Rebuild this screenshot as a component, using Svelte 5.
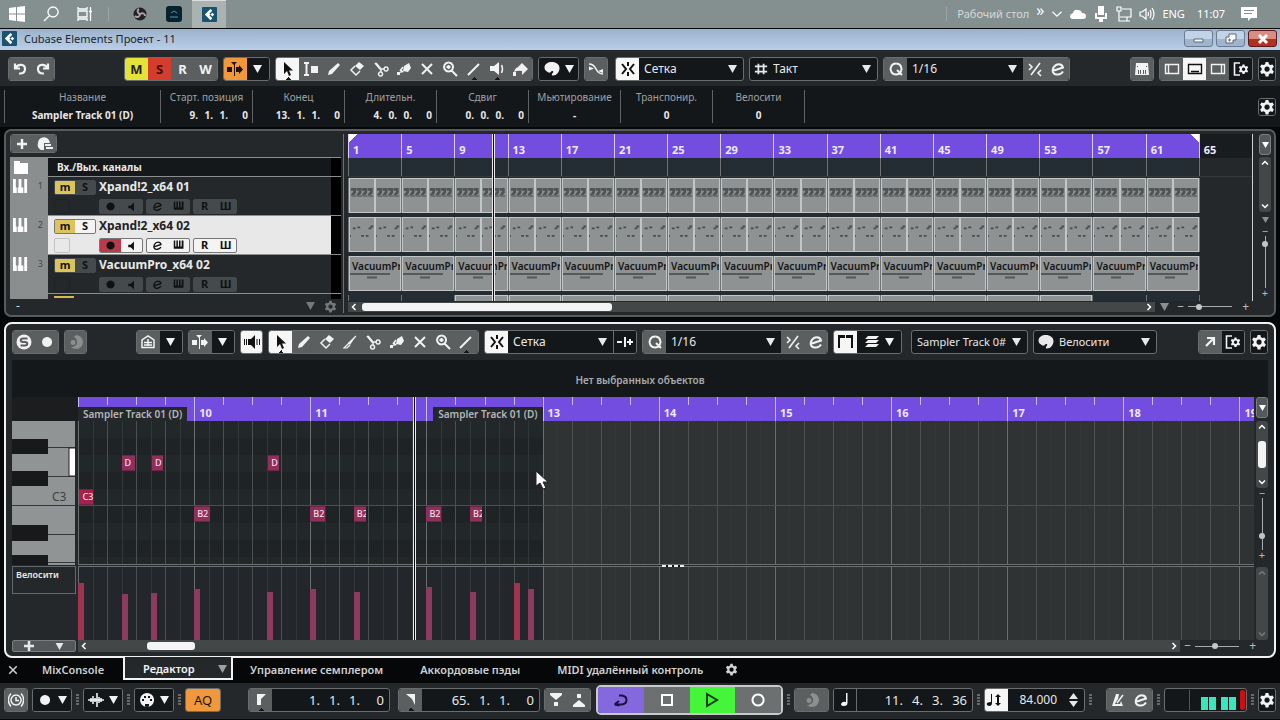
<script lang="ts">
	type Shape = { f?: string; s?: string; w?: number };

	// every icon is drawn on a 16x16 box: f = filled path, s = stroked path
	const icons: Record<string, Shape> = {
		undo: { s: 'M3 2.500v5h5M3.500 7C6 2.500 13 3 13 8c0 3-2 4.500-5 4.500H7', w: 2.2 },
		redo: { s: 'M13 2.500v5H8M12.500 7C10 2.500 3 3 3 8c0 3 2 4.500 5 4.500h1', w: 2.2 },
		scroll: { f: 'M0 6h5v5H0zM9 6h3V4l4 4.500-4 4.500v-2H9zM4 1h6L7 4z', s: 'M7.500 2v13', w: 1 },
		arrow: { f: 'M4 1v12l3-3 2 5 2-1-2-4.500h4z' },
		range: { f: 'M8 5h7v7H8z', s: 'M1 2h5M1 14h5M3.500 2v12', w: 2 },
		pencil: { f: 'M2 14l1-4 9-8 2 2-8 9z' },
		eraser: { f: 'M6 5l4-4 5 4-4 4z', s: 'M6 5l-4 4 5 5 4-4', w: 1.5 },
		knife: { f: 'M6 9l8-7-6 9z', s: 'M14 2L2 14h3l3-3', w: 1.2 },
		cut: { s: 'M2 2l5 6h4M3 2l5 6v3M13 6a2 2 0 1 0 .1 0M7.500 11a2 2 0 1 0 .1 0', w: 1.5 },
		glue: { f: 'M8 5l5-3 2 5-3 4-5-1zM5 8l3 3-4 1zM1 11h3v3H1z', s: 'M7 6l-3 4', w: 1.5 },
		mute: { s: 'M3 3l10 10M13 3L3 13', w: 2 },
		zoom: { s: 'M6.500 1.500a4.500 4.500 0 1 0 .1 0M10 10l5 5M4.500 6h4M6.500 4v4', w: 2 },
		line: { s: 'M2 14L13 3', w: 2 },
		speaker: { f: 'M1 5h4l5-4v13l-5-4H1z', s: 'M12.500 4q2 4 0 8', w: 1.5 },
		listen: { f: 'M4 5h3l4-4v14l-4-4H4z', s: 'M.5 5v6M2.500 5v6M13 5v6M15.500 5v6', w: 1 },
		bucket: { f: 'M6 6l4-4 6 6-6 6v-4q-4-1-8 1 1-4 4-5zM1 11h3v4H1z' },
		palette: { f: 'M8 1c4 0 7.500 2.500 7.500 6 0 4-3 7.500-6.500 7.500-2 0-1-2 0-3 1-1.500-1-2-2-1-1 2-3 1-4 0-1.500-1-2.500-2-2.500-4C.5 3 4 1 8 1z' },
		cross: { f: 'M1 5.500l5 2-5 2zM15 8l-5 2 5 2z', s: 'M1 3c9 0 5 10 14 10', w: 1.6 },
		snap: { s: 'M8 1v4M8 11v4M2 3l4 5-4 5M14 3l-4 5 4 5', w: 2 },
		hash: { s: 'M5 2v12M11 2v12M1 5h14M1 11h14', w: 2 },
		q: { s: 'M8 2.500a5.500 5.500 0 1 0 .1 0M9 9l5 5', w: 2 },
		swing: { s: 'M13 2L4 14M2 3l3 3-3 3M14 9l-3 3 3 3', w: 1.6 },
		e: { s: 'M4 9.500l9-3C12 2 6 2 3.500 6.500 1 12 5 14 8 13.500c2 0 4-1.500 5-3', w: 2 },
		keys: { f: 'M2 2h12l1 12H1zM4 9h1v4H4zM6 9h1v4H6zM9 9h1v4H9zM11 9h1v4h-1zM3 5h1v1H3zM12 5h1v1h-1z' },
		zoneL: { s: 'M1.500 3.500h13v9h-13zM4.500 4v8', w: 1.4 },
		zoneB: { s: 'M1.500 3.500h13v9h-13zM4 10.500h8', w: 1.4 },
		zoneR: { s: 'M1.500 3.500h13v9h-13zM11.500 4v8', w: 1.4 },
		piano: { f: 'M0 0h3v9h1v6H0zM6 9V0h3v9h2v6H5V9zM12 0h3v15h-3V9z' },
		minikeys: { f: 'M1 2h2v8h1.500V2h2v8H8V2h2v8h1.500V2H14v11H1z' },
		folder: { f: 'M1 1h6v2h8v11H1z' },
		plus: { s: 'M8 3v10M3 8h10', w: 2.5 },
		preset: { f: 'M1 7a6 6 0 0 1 11-3l1 3H7v7H4A6 6 0 0 1 1 7zM8 8h6v2H8zM9 11h7v2H9z' },
		dot: { f: 'M8 3a5 5 0 1 0 .1 0z' },
		monitor: { f: 'M4 7h3l4-4v11l-4-4H4z' },
		solo: { f: 'M8 0a8 8 0 1 0 .1 0z' },
		moon: { f: 'M8 1a7 7 0 0 1 0 14 8 8 0 0 1-5-2c7 0 8-7 3-10zM5 6a2.500 2.500 0 1 0 .1 0z' },
		house: { s: 'M2 13.500V6l6-4 6 4v7.500zM4 8.500h8M4 11h8M8 5v7', w: 1.5 },
		clip: { f: 'M0 1h7v3H2v10H0zM8 1h7v13h-2V4H8z' },
		layers: { f: 'M4 2h11l-3 3H1zM4 6h11l-3 3H1zM4 10h11l-3 3H1z' },
		adapt: { s: 'M0 8h5M8 3v10M10 8h6M13 5v6', w: 2 },
		open: { s: 'M5 4h7v7M12 4l-8 8', w: 2.2 },
		clock: { s: 'M8 3a5 5 0 1 0 .1 0M8 5v3.500h3M3 1.500C-.5 5-.5 11 3 14.500M13 1.500c3.500 3.500 3.500 9.500 0 13', w: 1.500 },
		wave: { s: 'M0 8h2M3 6v4M5 4v8M7 6v4M9 1v14M11 5v6M13 6v4M14 8h2M2 8h12', w: 1.6 },
		midi: { f: 'M8 1a7 7 0 1 0 .1 0zM3 7h2v2H3zM5 4h2v2H5zM9 4h2v2H9zM11 7h2v2h-2zM6 12h4v3H6z' },
		locL: { f: 'M4 2h9L8 7v6H4z' },
		locR: { f: 'M3 2h9v11L9 7z' },
		punchIn: { f: 'M2 1h12v2L8 8 2 3zM6 10h4v4H6z' },
		punchOut: { f: 'M2 15h12v-2L8 8l-6 5zM6 2h4v4H6z' },
		cycle: { s: 'M2 12l4-3M1.500 12.500H9c6-1 6-8 0-9H6M1.500 12.500l5 1', w: 2 },
		stop: { s: 'M3 3h10v10H3z', w: 2 },
		play: { s: 'M3 2l10 6-10 6z', w: 2 },
		record: { s: 'M8 2.500a5.500 5.500 0 1 0 .1 0z', w: 2 },
		note: { f: 'M9 1h1.500v10q0 3-3.500 3-3 0-3-2 1-3 5-2z' },
		tempo: { f: 'M5 2h1v9q0 3-3 3-3-1-2-3 2-1 4-1zM9 5l3-3 3 3h-2v6h2l-3 3-3-3h2V5z' },
		metro: { f: 'M6 2h3l-1 5-2 3-1 2h5l1-3 2 5H2z', s: 'M7 11l6-8', w: 1.600 },
		win: { f: 'M0 2l7-1v6.500H0zM8 1l8-1v7.500H8zM0 8.500h7V15l-7-1zM8 8.500h8V16l-8-1z' },
		search: { s: 'M10 1a5 5 0 1 0 .1 0M6.500 9.500L1 15', w: 1.3 },
		tasks: { s: 'M1 1v2h9V1M1 15v-2h9v2M1 5h9v6H1zM13.500 1v14M12 5.500h3', w: 1.3 },
		cloud: { f: 'M3 13q-3 0-3-3 0-2 3-3 1-4 5-3 3 0 4 3 4 0 4 3 0 3-3 3z' },
		mic: { f: 'M5 0h6v9H5zM2 7h2v4h8V7h2v6h-4v3H6v-3H2z' },
		net: { s: 'M6 3h9v8H4M1 1h4v4H1zM3 5v10h5M11 11v4M8 15h6', w: 1.2 },
		volume: { s: 'M1 6h2l4-3v10l-4-3H1zM9 6q1 2 0 4M11 4q2 4 0 8M13 2q4 6 0 12', w: 1.2 },
		message: { f: 'M0 1h16v11h-6l-3 3v-3H0zM3 4v1h10V4zM3 7v1h8V7z' },
		down: { s: 'M2 5l6 6 6-6', w: 1.6 },
		close: { s: 'M3 3l10 10M13 3L3 13', w: 2 },
		up: { s: 'M4 10l4-4 4 4', w: 2 },
		dn: { s: 'M4 6l4 4 4-4', w: 2 },
		lt: { s: 'M10 4L6 8l4 4', w: 2 },
		rt: { s: 'M6 4l4 4-4 4', w: 2 },
		gear: {
			f: 'M6.600 1h2.800l.5 2.200 1.500.9 2.100-.7 1.400 2.400-1.600 1.500v1.800l1.600 1.500-1.400 2.400-2.100-.7-1.500.9-.5 2.200H6.600l-.5-2.200-1.500-.9-2.100.7-1.400-2.400 1.600-1.500V7.300L1.100 5.800l1.400-2.400 2.100.7 1.500-.9zM8 5.500a2.600 2.600 0 1 0 .1 0z'
		},
		zoneGear: {
			f: 'M9.500 3.500h2l.3 1.400 1 .6 1.400-.5 1 1.700-1.100 1v1.200l1.100 1-1 1.700-1.400-.5-1 .6-.3 1.400h-2l-.3-1.400-1-.6-1.400.5-1-1.700 1.100-1V7.700l-1.100-1 1-1.700 1.400.5 1-.6zM10.500 6.500a1.700 1.700 0 1 0 .1 0z',
			s: 'M7 2H1.500v12H7',
			w: 1.6
		}
	};

	const info = [
		{ label: 'Название', value: 'Sampler Track 01 (D)' },
		{ label: 'Старт. позиция', time: ['9.', '1.', '1.', '0'] },
		{ label: 'Конец', time: ['13.', '1.', '1.', '0'] },
		{ label: 'Длительн.', time: ['4.', '0.', '0.', '0'] },
		{ label: 'Сдвиг', time: ['0.', '0.', '0.', '0'] },
		{ label: 'Мьютирование', value: '-' },
		{ label: 'Транспонир.', value: '0' },
		{ label: 'Велосити', value: '0' }
	];

	const tracks = [
		{ name: 'Xpand!2_x64 01', selected: false },
		{ name: 'Xpand!2_x64 02', selected: true },
		{ name: 'VacuumPro_x64 02', selected: false }
	];

	const projectBars = Array.from({ length: 17 }, (_, i) => 1 + i * 4);
	const tools = ['range', 'pencil', 'eraser', 'cut', 'glue', 'mute', 'zoom', 'line', 'speaker', 'bucket'];
	const editorTools = ['pencil', 'eraser', 'knife', 'cut', 'glue', 'mute', 'zoom', 'line'];

	// editor view: sixteenths counted from bar 9
	const visible = 162;
	const pct = (sixteenth: number) => `${(sixteenth / visible) * 100}%`;
	const gridLines = Array.from({ length: 81 }, (_, i) => i * 2);
	const beats = Array.from({ length: 41 }, (_, i) => i * 4);
	const editorBars = Array.from({ length: 11 }, (_, i) => 9 + i);
	const rowHeight = 17;

	const notes = [
		{ at: 0.2, len: 1.8, row: 4, name: 'C3', hot: true },
		{ at: 6, len: 1.8, row: 2, name: 'D' },
		{ at: 10.2, len: 1.5, row: 2, name: 'D' },
		{ at: 26.2, len: 1.5, row: 2, name: 'D' },
		{ at: 16, len: 2.2, row: 5, name: 'B2' },
		{ at: 32, len: 2, row: 5, name: 'B2' },
		{ at: 38, len: 1.7, row: 5, name: 'B2' },
		{ at: 48, len: 2, row: 5, name: 'B2' },
		{ at: 54, len: 1.6, row: 5, name: 'B2' }
	];

	const velocities = [
		{ at: 0, v: 57, hot: true },
		{ at: 6, v: 46 },
		{ at: 10, v: 47 },
		{ at: 16, v: 51 },
		{ at: 26, v: 48 },
		{ at: 32, v: 51 },
		{ at: 38, v: 48 },
		{ at: 48, v: 53 },
		{ at: 54, v: 48 },
		{ at: 60, v: 57, hot: true },
		{ at: 62, v: 51 }
	];

	let automation = $state(false);
</script>

{#snippet icon(name: string, size = 16)}
	<svg class="icon" width={size} height={size} viewBox="0 0 16 16" aria-hidden="true">
		{#if icons[name].f}<path d={icons[name].f} fill="currentColor" fill-rule="evenodd" />{/if}
		{#if icons[name].s}
			<path d={icons[name].s} fill="none" stroke="currentColor" stroke-width={icons[name].w} />
		{/if}
	</svg>
{/snippet}

{#snippet caret()}
	<svg class="caret" width="9" height="8" viewBox="0 0 9 8" aria-hidden="true"><path d="M0 0h9L4.500 8z" fill="currentColor" /></svg>
{/snippet}

{#snippet tool(name: string, cls = '')}
	<button class={cls} aria-label={name}>{@render icon(name)}</button>
{/snippet}

{#snippet dropdown(label: string, value: string)}
	<label class="dropdown">
		<select aria-label={label}><option>{value}</option></select>
		{@render caret()}
	</label>
{/snippet}

{#snippet dots()}
	<svg class="dots" width="3" height="12" viewBox="0 0 3 12"><path d="M0 1h3M0 4h3M0 7h3M0 10h3" stroke="#aaa" /></svg>
{/snippet}

{#snippet cubase(size: number)}
	<svg width={size} height={size} viewBox="0 0 16 16" aria-hidden="true">
		<rect width="16" height="16" rx="1" fill="#19536f" />
		<path d="M9 2L3 8l6 6 2-2-3-3 1-1-1-1 3-3z" fill="#fff" />
		<path d="M11 6l2 2-2 2-2-2z" fill="#fff" />
	</svg>
{/snippet}

{#snippet time(parts: string[])}
	<span class="time">{#each parts as part}<span>{part}</span>{/each}</span>
{/snippet}

{#snippet pianoRollGrid()}
	{#each gridLines as at}
		<i class="line" class:bar={at % 16 === 0} class:beat={at % 4 === 0} class:inside={at < 64} style="left: {pct(at)}"></i>
	{/each}
{/snippet}

<header class="taskbar">
	<button aria-label="Пуск">{@render icon('win')}</button>
	<button aria-label="Поиск">{@render icon('search')}</button>
	<button aria-label="Задачи">{@render icon('tasks')}</button>
	<i class="sep"></i>
	<button aria-label="OBS">
		<svg width="14" height="14" viewBox="0 0 14 14"><circle cx="7" cy="7" r="6.500" fill="#241f22" /><path d="M7 7C4 6 4 3 6 2M7 7c3-2 5 0 5 2M7 7c0 3-3 4-5 2" fill="none" stroke="#a9a5a7" stroke-width="2" /></svg>
	</button>
	<button aria-label="Менеджер">
		<svg width="16" height="16" viewBox="0 0 16 16"><rect width="16" height="16" rx="3" fill="#06222c" /><path d="M4 11h8M5 7l3-2 3 2" stroke="#5b93a1" fill="none" /></svg>
	</button>
	<button class="running" aria-label="Cubase">{@render cubase(15)}</button>
	<div class="tray">
		<i class="sep"></i>
		<span class="desk">Рабочий стол</span>
		<span class="more">»</span>
		{@render icon('down', 12)}
		{@render icon('cloud')}
		{@render icon('mic')}
		{@render icon('net')}
		{@render icon('volume')}
		<span>ENG</span>
		<span class="clock">11:07</span>
		{@render icon('message')}
	</div>
</header>

<div class="titlebar">
	{@render cubase(15)}
	<span>Cubase Elements Проект - 11</span>
	<button aria-label="Свернуть"><svg width="12" height="10"><path d="M1 5h9v3H1z" fill="#fff" stroke="#56677c" /></svg></button>
	<button aria-label="Восстановить"><svg width="12" height="11"><path d="M4 1h7v6H8v3H1V4h3zM4 6h1v2H4z" fill="#fff" stroke="#56677c" /></svg></button>
	<button class="quit" aria-label="Закрыть"><svg width="12" height="10"><path d="M2 1l8 8M10 1L2 9" stroke="#fff" stroke-width="3" /></svg></button>
</div>

<div class="toolbar">
	<div class="group two history">{@render tool('undo')}{@render tool('redo')}</div>
	<div class="group four states">
		<button class="yellow">M</button>
		<button class="red">S</button>
		<button onclick={() => (automation = !automation)}>R</button>
		<button>W</button>
	</div>
	<div class="group two">{@render tool('scroll', 'orange')}<button class="dark" aria-label="Меню">{@render caret()}</button></div>
	<div class="group tools">
		{@render tool('arrow', 'on notch')}
		{#each tools as name}{@render tool(name, name === 'line' || name === 'speaker' ? 'notch' : '')}{/each}
	</div>
	<div class="group pair"><button class="dark wide" aria-label="Цвет">{@render icon('palette')}{@render caret()}</button></div>
	<div class="group one">{@render tool('cross')}</div>
	<div class="group snap">{@render tool('snap', 'on')}{@render dropdown('Привязка', 'Сетка')}</div>
	<div class="group gridtype"><span class="lead">{@render icon('hash', 14)}</span>{@render dropdown('Тип сетки', 'Такт')}</div>
	<div class="group quant">{@render tool('q')}{@render dropdown('Квантизация', '1/16')}{@render tool('swing')}{@render tool('e')}</div>
	<div class="group one end">{@render tool('keys')}</div>
	<div class="group four">
		{@render tool('zoneL')}{@render tool('zoneB', 'on')}{@render tool('zoneR')}{@render tool('zoneGear', 'dark')}
	</div>
	<div class="group slim">{@render tool('gear', 'dark')}</div>
</div>

<div class="infoline">
	{#each info as cell}
		<div class="cell">
			<span class="label">{cell.label}</span>
			{#if cell.time}{@render time(cell.time)}{:else}<b>{cell.value}</b>{/if}
		</div>
	{/each}
	<div class="cell last"><div class="group slim">{@render tool('gear', 'dark')}</div></div>
</div>

<section class="project">
	<div class="tracklist">
		<div class="list-head"><div class="group two small">{@render tool('plus')}{@render tool('preset')}</div></div>
		<div class="rows">
			<div class="track io">
				<div class="strip">{@render icon('folder')}</div>
				<b>Вх./Вых. каналы</b>
				<i class="meter"></i>
			</div>
			{#each tracks as track, i}
				<div class="track" class:selected={track.selected}>
					<div class="strip">{@render icon('piano', 15)}<small>{i + 1}</small></div>
					<div class="body">
						<div class="line1">
							<div class="ms"><button class="m">m</button><button>S</button></div>
							<b>{track.name}</b>
						</div>
						<div class="line2">
							<i class="slot"></i>
							<div class="mini"><button class="rec" aria-label="Запись">{@render icon('dot', 13)}</button><button aria-label="Монитор">{@render icon('monitor', 13)}</button></div>
							<div class="mini"><button aria-label="Правка">{@render icon('e', 11)}</button><button aria-label="Инструмент">{@render icon('minikeys', 12)}</button></div>
							<div class="mini"><button>R</button><button>Ш</button></div>
						</div>
					</div>
					<i class="meter"></i>
				</div>
			{/each}
			<div class="track cut"><div class="strip"></div><i class="peek"></i><i class="meter"></i></div>
		</div>
		<div class="list-foot"><span>-</span>{@render caret()}{@render icon('gear', 13)}</div>
	</div>

	<div class="arrange">
		<div class="canvas">
			<div class="ruler">
				{#each projectBars as bar}<span class:outside={bar === 65}>{bar}</span>{/each}
			</div>
			<div class="lane io-lane">{#each projectBars as _}<i></i>{/each}</div>
			<div class="lane">
				{#each projectBars as bar}
					<div class="slot4">
						{#if bar < 65}
							{#each [0, 1] as _}
								<svg class="clip" viewBox="0 0 26 35" preserveAspectRatio="none">
									<path d="M1 11h4v3l-3 4M7 11h4v3l-3 4M13 11h4v3l-3 4M19 11h4v3l-3 4" fill="none" stroke="#505455" stroke-width="3" />
									<path d="M2 18h23" stroke="#6a6e6f" stroke-width="2" stroke-dasharray="5 1" />
								</svg>
							{/each}
						{/if}
					</div>
				{/each}
			</div>
			<div class="lane">
				{#each projectBars as bar}
					<div class="slot4">
						{#if bar < 65}
							{#each [0, 1] as _}
								<svg class="clip" viewBox="0 0 26 35" preserveAspectRatio="none">
									<path d="M3 11h3M8 10h3M20 11h3M22 9h3M12 19h3M17 19h3M0 19h1" stroke="#484c4d" stroke-width="2" />
								</svg>
							{/each}
						{/if}
					</div>
				{/each}
			</div>
			<div class="lane">
				{#each projectBars as bar}
					<div class="slot4">
						{#if bar < 65}
							<div class="clip named">
								<span>VacuumPr</span>
								<svg width="42" height="7" viewBox="0 0 42 7"><path d="M0 1h40M17 4.500h10" stroke="#55595a" stroke-width="2" /></svg>
							</div>
						{/if}
					</div>
				{/each}
			</div>
			<div class="lane sliver">
				{#each projectBars as bar}<div class="slot4">{#if bar > 8 && bar < 57}<div class="clip"></div>{/if}</div>{/each}
			</div>
			<i class="playhead" style="left: {(10.85 / 68) * 100}%"></i>
		</div>
		<div class="hscroll">
			<div class="track-bar"><button aria-label="Влево">{@render icon('lt', 12)}</button><i class="thumb first"></i><button aria-label="Вправо">{@render icon('rt', 12)}</button></div>
			{@render caret()}
			<span>−</span><input type="range" value="20" aria-label="Масштаб по горизонтали" /><span>+</span>
		</div>
	</div>

	<div class="side">
		<button class="drop" aria-label="Меню линейки">{@render caret()}</button>
		<div class="vscroll"><button aria-label="Вверх">{@render icon('up', 12)}</button><button aria-label="Вниз">{@render icon('dn', 12)}</button></div>
		{@render caret()}
		<span>−</span><input type="range" value="10" aria-label="Масштаб по вертикали" /><span>+</span>
	</div>
</section>

<section class="editor">
	<div class="toolbar">
		<div class="group two">
			<button aria-label="Соло">
				<svg width="16" height="16" viewBox="0 0 16 16"><circle cx="8" cy="8" r="7.500" fill="#f2f2f2" /><path d="M11.500 4.500H7c-3 0-3 3.500 0 3.500h2c3 0 3 3.500 0 3.500H4.500" fill="none" stroke="#5b5f60" stroke-width="2" /></svg>
			</button>
			{@render tool('dot')}
		</div>
		<div class="group one">{@render tool('moon', 'dim')}</div>
		<div class="group two house">{@render tool('house')}<button class="dark" aria-label="Меню">{@render caret()}</button></div>
		<div class="group two">{@render tool('scroll')}<button class="dark" aria-label="Меню">{@render caret()}</button></div>
		<div class="group one">{@render tool('listen', 'on')}</div>
		<div class="group etools">
			{@render tool('arrow', 'on notch')}
			{#each editorTools as name}{@render tool(name, name === 'line' ? 'notch' : '')}{/each}
		</div>
		<div class="group esnap">{@render tool('snap', 'on')}{@render dropdown('Привязка', 'Сетка')}{@render tool('adapt', 'dark edge-left')}</div>
		<div class="group quant">{@render tool('q')}{@render dropdown('Квантизация', '1/16')}{@render tool('swing')}{@render tool('e')}</div>
		<div class="group parts">{@render tool('clip', 'on')}<button class="dark wide" aria-label="Слои">{@render icon('layers')}{@render caret()}</button></div>
		<div class="group part">{@render dropdown('Партия', 'Sampler Track 0#')}</div>
		<div class="group color"><span class="lead">{@render icon('palette')}</span>{@render dropdown('Цвета', 'Велосити')}</div>
		<div class="group two end">{@render tool('open')}{@render tool('zoneGear', 'dark')}</div>
		<div class="group slim">{@render tool('gear', 'dark')}</div>
	</div>

	<p class="status">Нет выбранных объектов</p>

	<div class="roll">
		<div class="left">
			<div class="corner"></div>
			<svg class="keyboard" width="63" height="144" viewBox="0 0 63 144">
				<rect width="63" height="144" fill="#909495" />
				<path d="M36 26.500h27M36 55.500h27M0 84.500h63M36 113.500h27M36 141.500h27" stroke="#34383a" />
				<path d="M0 18h36v15H0zM0 50h36v15H0zM0 104h36v16H0zM0 134h36v10H0z" fill="#17191a" />
				<path d="M57 27h7v28h-7z" fill="#fff" stroke="#222" />
				<text x="40" y="80" font-size="12" fill="#3d4142">C3</text>
			</svg>
			<div class="lane-name">Велосити</div>
			<div class="lane-buttons">{@render tool('plus')}<button aria-label="Меню дорожек">{@render caret()}</button></div>
		</div>

		<div class="view">
			<div class="eruler">
				{#each beats as at}<i class:bar={at % 16 === 0} style="left: {pct(at)}"></i>{/each}
				{#each editorBars as bar, i}{#if bar !== 9 && bar !== 12}<b style="left: {pct(i * 16)}">{bar}</b>{/if}{/each}
				<span class="part-name" style="left: 0">Sampler Track 01 (D)</span>
				<span class="part-name" style="right: {100 - (64 / visible) * 100}%">Sampler Track 01 (D)</span>
			</div>
			<div class="notes">
				<div class="shade" style="width: {pct(64)}"></div>
				{@render pianoRollGrid()}
				{#each notes as note}
					<span class="note" class:hot={note.hot} style="left: {pct(note.at)}; width: {pct(note.len)}; top: {note.row * rowHeight}px">{note.name}</span>
				{/each}
			</div>
			<div class="divider"><i style="left: {pct(80.4)}"></i></div>
			<div class="velocity">
				<div class="shade" style="width: {pct(64)}"></div>
				{@render pianoRollGrid()}
				{#each velocities as bar}
					<i class="vel" class:hot={bar.hot} style="left: {pct(bar.at)}; height: {bar.v}px"></i>
				{/each}
			</div>
			<i class="playhead" style="left: {pct(46.2)}"></i>
			<svg class="cursor" width="14" height="20" viewBox="0 0 14 20" style="left: {pct(63)}"><path d="M1 1v15l4-3 3 6 3-1-3-6h5z" fill="#fff" stroke="#222" /></svg>
		</div>

		<div class="side">
			<button class="drop" aria-label="Меню линейки">{@render caret()}</button>
			<div class="vscroll tall"><button aria-label="Вверх">{@render icon('up', 12)}</button><i></i><button aria-label="Вниз">{@render icon('dn', 12)}</button></div>
			<span>−</span><input type="range" value="75" aria-label="Высота нот" /><span>+</span>
			<div class="vscroll faded"><button aria-label="Вверх">{@render icon('up', 12)}</button><button aria-label="Вниз">{@render icon('dn', 12)}</button></div>
		</div>
		<div class="hscroll">
			<div class="track-bar"><button aria-label="Влево">{@render icon('lt', 12)}</button><i class="thumb second"></i><button aria-label="Вправо">{@render icon('rt', 12)}</button></div>
			<span>−</span><input type="range" value="45" aria-label="Масштаб по горизонтали" /><span>+</span>
		</div>
	</div>
</section>

<nav class="tabs">
	<button aria-label="Закрыть">{@render icon('close', 12)}</button>
	<a href="#mix">MixConsole</a>
	<a href="#editor" class="current">Редактор {@render caret()}</a>
	<a href="#sampler">Управление семплером</a>
	<a href="#chords">Аккордовые пэды</a>
	<a href="#midi">MIDI удалённый контроль</a>
	<button aria-label="Настройка">{@render icon('gear', 13)}</button>
</nav>

<footer class="transport">
	<div class="group one">{@render tool('clock')}</div>
	<div class="group pair"><button class="dark wide" aria-label="Режим записи">{@render icon('dot')}{@render caret()}</button></div>
	{@render dots()}
	<div class="group pair"><button class="dark wide" aria-label="Аудио">{@render icon('wave')}{@render caret()}</button></div>
	{@render dots()}
	<div class="group pair"><button class="dark wide" aria-label="MIDI">{@render icon('midi')}{@render caret()}</button></div>
	{@render dots()}
	<div class="group aq"><button class="orange">AQ</button></div>
	<div class="group locator first-loc">{@render tool('locL', 'notch')}{@render time(['1.', '1.', '1.', '0'])}</div>
	<div class="group locator">{@render tool('locR', 'notch')}{@render time(['65.', '1.', '1.', '0'])}</div>
	<div class="group two">{@render tool('punchIn')}{@render tool('punchOut')}</div>
	<div class="main-controls">
		{@render tool('cycle', 'purple')}{@render tool('stop')}{@render tool('play', 'green')}{@render tool('record')}
	</div>
	{@render dots()}
	<div class="group moon">{@render tool('moon', 'dim')}</div>
	<div class="group locator position">{@render tool('note', 'dark edge')}{@render time(['11.', '4.', '3.', '36'])}</div>
	{@render dots()}
	<div class="group tempo">
		{@render tool('tempo', 'on')}
		<input type="text" value="84.000" aria-label="Темп" />
		<svg width="9" height="16" viewBox="0 0 9 16"><path d="M0 7l4.500-6L9 7zM0 9h9l-4.500 6z" fill="#e6e6e6" /></svg>
	</div>
	{@render dots()}
	<div class="group two click">{@render tool('metro')}{@render tool('e')}</div>
	{@render dots()}
	<div class="group levels">
		<svg viewBox="0 0 81 22" width="81" height="22">
			<path d="M24.500 1v20" stroke="#555" />
			<path d="M36 8h7v13h-7zM44 8h7v13h-7zM56 8h7v13h-7zM64 8h7v13h-7z" fill="#3ae6bd" />
			<rect x="75" y="1" width="5" height="20" rx="2" fill="#c8100f" />
		</svg>
	</div>
	{@render dots()}
	<div class="group slim">{@render tool('gear', 'dark')}</div>
</footer>

<style>
	:global(body) {
		margin: 0;
		background: #060708;
		color: #e8e8e8;
		font-family: 'Noto Sans', 'Open Sans', sans-serif;
		font-size: 12px;
		line-height: 16px;
		overflow: hidden;
	}

	:global(*) {
		box-sizing: border-box;
	}

	button,
	input,
	select {
		font: inherit;
		color: inherit;
		padding: 0;
		border: 0;
		margin: 0;
		background: none;
	}

	button {
		display: flex;
		align-items: center;
		justify-content: center;
	}

	a {
		color: inherit;
		text-decoration: none;
	}

	svg {
		flex: none;
		display: block;
	}

	/* windows taskbar */
	.taskbar {
		display: flex;
		align-items: center;
		height: 28px;
		background: #849090;
		color: #fff;
	}

	.taskbar button {
		width: 34px;
		height: 28px;
	}

	.taskbar .sep {
		width: 1px;
		height: 14px;
		margin: 0 7px 0 6px;
		background: #9aa5a5;
	}

	.taskbar button.running {
		margin-left: 1px;
		background: #aab2b2;
		border-top: 1px solid #d9dddd;
	}

	.taskbar button:nth-of-type(4) {
		margin-left: 7px;
	}

	.tray {
		display: flex;
		align-items: center;
		gap: 7px;
		margin-left: auto;
		padding-right: 23px;
		font-size: 11px;
	}

	.tray .sep {
		margin: 0 3px 0 0;
	}

	.desk {
		color: #d5dada;
	}

	.more {
		font-size: 16px;
		line-height: 12px;
		margin-bottom: 8px;
	}

	.clock {
		margin: 0 9px 0 5px;
	}

	.titlebar {
		display: flex;
		align-items: center;
		gap: 3px;
		height: 22px;
		margin-top: 1px;
		padding: 0 3px 2px 2px;
		border-bottom: 1px solid #222;
		background: linear-gradient(#9db3cc, #b9cfe9);
		color: #1c2530;
		font-size: 11px;
	}

	.titlebar span {
		margin: 0 auto 0 4px;
	}

	.titlebar button {
		width: 29px;
		height: 17px;
		border: 1px solid #6a7c93;
		border-radius: 3px;
		background: linear-gradient(#c3d3e6 50%, #9fb4cd 50%);
	}

	.titlebar button.quit {
		background: linear-gradient(#d98c80 50%, #b42f22 50%);
		border-color: #5a1a17;
	}

	/* shared control groups */
	.toolbar {
		display: flex;
		align-items: center;
		gap: 5px;
		height: 35px;
		padding: 0 4px 0 8px;
		background: #25282b;
	}

	.group {
		display: flex;
		flex: none;
		height: 24px;
		border: 1px solid #6a6d6e;
		border-radius: 3px;
		background: #14171a;
		overflow: hidden;
	}

	.group > button {
		flex: 1;
		background: #5b5f60;
		color: #f2f2f2;
	}

	.one {
		width: 24px;
	}

	.two {
		width: 47px;
	}

	.four {
		width: 94px;
	}

	.pair {
		width: 41px;
	}

	.slim {
		width: 18px;
	}

	.tools {
		width: 258px;
	}

	.group > button.on {
		background: #f6f6f6;
		color: #111;
	}

	.group > button.dark {
		background: #14171a;
	}

	.group > button.wide {
		gap: 5px;
	}

	.group > button.dim {
		color: #8b8f90;
	}

	.group > button.yellow {
		background: #e3e23a;
		color: #222;
	}

	.group > button.red {
		background: #d43d2e;
		color: #3a0906;
	}

	.group > button.orange {
		background: #f2983c;
		color: #1d1408;
	}

	.group > button.notch {
		background-image: conic-gradient(from 135deg at 50% 0, #14171a 90deg, transparent 0);
		background-size: 6px 3px;
		background-position: 50% 100%;
		background-repeat: no-repeat;
	}

	.history {
		margin-right: 64px;
	}

	.states {
		font-size: 13px;
		font-weight: 700;
	}

	.snap {
		width: 129px;
		margin-left: 2px;
	}

	.snap > button,
	.esnap > button,
	.quant > button,
	.locator > button,
	.tempo > button {
		flex: 0 0 23px;
	}

	.gridtype {
		width: 129px;
	}

	.quant {
		width: 187px;
	}

	.end {
		margin-left: auto;
	}

	.lead {
		display: flex;
		align-items: center;
		padding-left: 4px;
	}

	.dropdown {
		display: grid;
		flex: 1;
		align-items: center;
		min-width: 0;
	}

	.dropdown select {
		grid-area: 1 / 1;
		appearance: none;
		padding-left: 5px;
		height: 22px;
	}

	.dropdown .caret {
		grid-area: 1 / 1;
		justify-self: end;
		margin-right: 6px;
		pointer-events: none;
	}

	/* info line */
	.infoline {
		display: flex;
		height: 41px;
		margin-bottom: 2px;
		padding: 4px;
		background: #14171a;
		font-size: 10px;
	}

	.cell {
		display: flex;
		flex-direction: column;
		justify-content: space-between;
		align-items: center;
		width: 92px;
		border-left: 1px solid #606465;
	}

	.cell:first-child {
		width: 156px;
	}

	.cell .label {
		color: #9da0a1;
		line-height: 15px;
	}

	.cell .time {
		align-self: flex-end;
		font-weight: 700;
		padding-right: 4px;
	}

	.cell.last {
		flex: 1;
		align-items: flex-end;
		justify-content: center;
	}

	.cell.last .group {
		height: 18px;
	}

	.time {
		display: flex;
		align-items: center;
		justify-content: flex-end;
	}

	.time span {
		min-width: 15px;
		text-align: right;
	}

	.time span:last-child {
		min-width: 20px;
	}

	/* project window */
	.project {
		display: flex;
		margin: 0 4px 5px;
		padding: 3px 3px 2px 4px;
		border: 2px solid #575b5c;
		border-radius: 7px;
		background: #25282b;
	}

	.tracklist {
		display: flex;
		flex-direction: column;
		width: 334px;
		border-right: 1px solid #6d7172;
	}

	.list-head {
		height: 23px;
	}

	.small {
		height: 19px;
	}

	.rows {
		margin-right: 2px;
		border-top: 1px solid #8a8e8f;
	}

	.track {
		display: flex;
		height: 39px;
		border-bottom: 1px solid #8a8e8f;
	}

	.track.io {
		height: 19px;
		background: #15181a;
		font-size: 10px;
		align-items: center;
	}

	.track.io b {
		padding-left: 9px;
	}

	.track.cut {
		height: 5px;
		border: 0;
	}

	.peek {
		width: 20px;
		height: 2px;
		margin: 2px 0 0 6px;
		background: #d6b84c;
	}

	.strip {
		display: flex;
		align-self: stretch;
		justify-content: space-between;
		width: 38px;
		padding: 2px 5px 0 3px;
		background: #8a8e8f;
		color: #fff;
	}

	.strip small {
		font-size: 9px;
		line-height: 14px;
		color: #45494a;
	}

	.meter {
		align-self: stretch;
		width: 10px;
		margin-left: auto;
		background: #000;
	}

	.body {
		display: flex;
		flex-direction: column;
		gap: 3px;
		padding: 2px 0 0 6px;
		flex: 1;
	}

	.line1,
	.line2 {
		display: flex;
		align-items: center;
		gap: 3px;
		height: 16px;
	}

	.ms,
	.mini {
		display: flex;
		height: 15px;
		border: 1px solid #454a4c;
		border-radius: 2px;
		background: #454a4c;
		color: #111;
		font-size: 11px;
		font-weight: 700;
		line-height: 12px;
		overflow: hidden;
	}

	.ms {
		width: 42px;
	}

	.mini {
		width: 44px;
	}

	.ms button,
	.mini button {
		flex: 1;
	}

	.ms .m {
		background: #dcc45c;
	}

	.slot {
		width: 16px;
		height: 15px;
		margin-right: 26px;
		border: 1px solid #202325;
		border-radius: 2px;
	}

	.selected {
		background: #e8e8e8;
		color: #222;
	}

	.selected .ms,
	.selected .mini {
		background: #f4f4f4;
		border-color: #777;
	}

	.selected .slot {
		border-color: #c4c4c4;
	}

	.selected .rec {
		background: #b93a4c;
	}

	.list-foot {
		display: flex;
		align-items: center;
		gap: 9px;
		height: 14px;
		padding: 0 6px;
		color: #74797a;
	}

	.list-foot span {
		margin-right: auto;
		color: #ddd;
	}

	.arrange {
		flex: 1;
		min-width: 0;
		padding-left: 4px;
	}

	.canvas {
		position: relative;
		border-right: 1px solid #d0d0d0;
	}

	.ruler,
	.lane {
		display: grid;
		grid-template-columns: repeat(17, minmax(0, 1fr));
	}

	.ruler {
		height: 24px;
		font-weight: 700;
	}

	.ruler span {
		padding: 8px 0 0 4px;
		border-left: 1px solid #d9cffa;
		background: #734ddf;
		color: #efeaff;
		font-size: 11px;
	}

	.ruler span:first-child {
		background: linear-gradient(135deg, #fff 6px, #734ddf 6px);
	}

	.ruler span.outside {
		background: #191c1e;
	}

	.ruler span:nth-child(16) {
		background: linear-gradient(225deg, #fff 6px, #734ddf 6px);
	}

	.lane {
		height: 39px;
		padding: 1px 0 3px;
		background: linear-gradient(90deg, #252d34 94%, #25282b 94%);
	}

	.io-lane {
		height: 19px;
		padding: 0;
		border-bottom: 1px solid #34393b;
	}

	.io-lane i,
	.slot4 {
		border-left: 1px solid #6d7375;
	}

	.slot4 {
		display: flex;
	}

	.clip {
		flex: 1;
		min-width: 0;
		width: 0;
		height: 35px;
		border: 1px solid #c3c6c6;
		background: #8e9293;
		overflow: hidden;
	}

	.named {
		color: #151515;
		font-size: 10px;
		font-weight: 600;
		line-height: 14px;
		padding-top: 2px;
	}

	.named span {
		display: block;
		padding-left: 2px;
		overflow: hidden;
	}

	.sliver {
		height: 7px;
		overflow: hidden;
	}

	.playhead {
		position: absolute;
		top: 0;
		bottom: 0;
		width: 3px;
		border: solid #e8e8e8;
		border-width: 0 1px;
		background: #111;
	}

	.hscroll {
		display: flex;
		align-items: center;
		gap: 4px;
		height: 11px;
		color: #b8bbbb;
		line-height: 10px;
	}

	.track-bar {
		display: flex;
		align-items: center;
		flex: 1;
		height: 10px;
		background: #434748;
		color: #fff;
	}

	.track-bar button:last-child {
		margin-left: auto;
	}

	.thumb {
		height: 8px;
		border-radius: 3px;
		background: #f4f4f4;
	}

	.thumb.first {
		width: 31%;
		margin-left: 2px;
	}

	.thumb.second {
		width: 48px;
		margin-left: 57px;
	}

	.hscroll .caret {
		margin: 0 4px 0 1px;
		color: #8b8f90;
	}

	.hscroll input {
		width: 44px;
		height: 10px;
	}

	input[type='range'] {
		appearance: none;
		background: linear-gradient(#a9acad, #a9acad) center / 100% 1px no-repeat;
	}

	input[type='range']::-webkit-slider-thumb {
		appearance: none;
		width: 6px;
		height: 6px;
		border-radius: 3px;
		background: #c4c6c6;
	}

	.hscroll span:last-child {
		margin: 0 4px 0 6px;
	}

	.side {
		display: flex;
		flex-direction: column;
		align-items: center;
		width: 12px;
		margin-left: 6px;
		color: #b8bbbb;
		font-size: 11px;
		line-height: 10px;
	}

	.side .drop {
		width: 12px;
		height: 21px;
		border: 1px solid #7a7e7f;
		border-radius: 3px;
		background: #54585a;
		color: #fff;
	}

	.side .drop .caret {
		width: 7px;
	}

	.vscroll {
		display: flex;
		flex-direction: column;
		justify-content: space-between;
		width: 12px;
		height: 55px;
		margin: 2px 0 4px;
		border-radius: 3px;
		background: #434748;
		color: #fff;
	}

	.side > .caret {
		width: 7px;
		margin-bottom: 2px;
		color: #8b8f90;
	}

	.side input {
		writing-mode: vertical-lr;
		width: 8px;
		height: 52px;
		background: linear-gradient(#a9acad, #a9acad) center / 1px 100% no-repeat;
	}

	/* lower zone */
	.editor {
		margin: 0 4px;
		padding: 0 6px 4px;
		border: 2px solid #f2f2f2;
		border-radius: 8px;
		background: #25282b;
	}

	.editor .toolbar {
		height: 36px;
		padding: 0;
	}

	.editor .one {
		width: 23px;
	}

	.house {
		margin-left: 44px;
	}

	.etools {
		width: 211px;
	}

	.esnap {
		width: 153px;
	}

	.group > button.edge-left {
		border-left: 1px solid #6a6d6e;
	}

	.editor .quant {
		width: 186px;
	}

	.parts {
		width: 69px;
	}

	.parts > button.on {
		flex: 0 0 23px;
	}

	.parts .wide {
		gap: 8px;
	}

	.part {
		width: 117px;
		margin-left: 4px;
		font-size: 11px;
	}

	.color {
		width: 124px;
		font-size: 11px;
	}

	.status {
		margin: 0;
		height: 37px;
		padding-top: 12px;
		background: #15181a;
		color: #a8abac;
		text-align: center;
		font-size: 10px;
		font-weight: 600;
	}

	.roll {
		display: grid;
		grid-template-columns: 66px minmax(0, 1fr) auto;
	}

	.roll > .left {
		grid-row: 1 / 3;
	}

	.corner {
		height: 24px;
		background: #1b1d1f;
	}

	.lane-name {
		width: 64px;
		height: 28px;
		margin: 1px 0 46px;
		padding-left: 3px;
		border: 1px solid #63686a;
		font-size: 9px;
		font-weight: 600;
	}

	.lane-buttons {
		display: flex;
		width: 64px;
		height: 12px;
		border: 1px solid #7a7e7f;
		border-radius: 2px;
		background: #54585a;
		overflow: hidden;
	}

	.lane-buttons button {
		flex: 1;
	}

	.lane-buttons .caret {
		height: 7px;
	}

	.view {
		position: relative;
		overflow: hidden;
	}

	.eruler {
		position: relative;
		height: 24px;
		background: #734ddf;
		overflow: hidden;
	}

	.eruler i {
		position: absolute;
		top: 0;
		width: 1px;
		height: 8px;
		background: #c9bbf7;
	}

	.eruler i.bar {
		height: 24px;
	}

	.eruler b {
		position: absolute;
		top: 8px;
		padding-left: 5px;
		color: #efeaff;
		font-size: 11px;
	}

	.part-name {
		position: absolute;
		top: 10px;
		padding: 0 5px;
		background: #25282b;
		color: #b4b7b8;
		font-size: 10px;
		line-height: 15px;
		font-weight: 600;
	}

	.notes,
	.velocity {
		position: relative;
		background: #2f3334;
		overflow: hidden;
	}

	.notes {
		height: 143px;
	}

	.notes::after {
		content: '';
		position: absolute;
		top: 84px;
		left: 0;
		right: 0;
		height: 1px;
		background: #4a4f50;
	}

	.velocity {
		height: 73px;
	}

	.shade {
		position: absolute;
		top: 0;
		bottom: 0;
		left: 0;
		background: #23272b;
	}

	.notes .shade {
		background: repeating-linear-gradient(#22272a 0 17px, #1f2326 17px 34px);
	}

	.line {
		position: absolute;
		top: 0;
		bottom: 0;
		width: 1px;
		background: #333738;
	}

	.line.inside {
		background: #32373a;
	}

	.line.beat {
		background: #4b5051;
	}

	.line.bar {
		background: #6a6e6f;
	}

	.note {
		position: absolute;
		z-index: 1;
		height: 16px;
		padding-left: 3px;
		border: solid #6d2547;
		border-width: 1px 0;
		background: #8f2f5c;
		color: #f7dfe9;
		font-size: 9px;
		font-weight: 500;
		line-height: 14px;
		overflow: hidden;
	}

	.note.hot {
		background: #a5234a;
	}

	.divider {
		position: relative;
		height: 3px;
		border: solid #6d7172;
		border-width: 1px 0;
		background: #25282b;
	}

	.divider i {
		position: absolute;
		width: 22px;
		height: 2px;
		background: repeating-linear-gradient(90deg, #eee 0 4px, #111 4px 6px);
	}

	.vel {
		position: absolute;
		bottom: 0;
		width: 6px;
		background: #8c3a5e;
	}

	.vel.hot {
		background: #a03450;
	}

	.cursor {
		position: absolute;
		top: 73px;
		z-index: 2;
	}

	.roll .side {
		margin-left: 2px;
	}

	.vscroll.tall {
		height: 67px;
		margin: 3px 0 0;
	}

	.tall i {
		width: 8px;
		height: 27px;
		margin: auto;
		border-radius: 3px;
		background: #f2f2f2;
	}

	.vscroll.faded {
		height: 73px;
		margin: 7px 0 0;
		color: #74797a;
	}

	.roll .hscroll {
		grid-column: 2 / 4;
		height: 12px;
		padding-right: 8px;
	}

	.roll .track-bar {
		height: 12px;
	}

	/* lower zone tabs */
	.tabs {
		display: flex;
		align-items: center;
		height: 25px;
		padding-left: 7px;
		padding-bottom: 2px;
		font-size: 11px;
		font-weight: 600;
		color: #cfd1d1;
	}

	.tabs a:nth-of-type(1) {
		margin: 0 19px 0 23px;
	}

	.tabs a.current {
		position: relative;
		display: flex;
		align-items: center;
		justify-content: space-between;
		width: 110px;
		height: 23px;
		margin: -3px 17px 0 0;
		padding: 3px 4px 0 18px;
		border: 2px solid #f2f2f2;
		border-top: 0;
		background: #25282b;
		color: #f4f4f4;
	}

	.current .caret {
		color: #9da0a1;
	}

	.tabs a:nth-of-type(n + 4) {
		margin-left: 37px;
	}

	.tabs button:last-child {
		margin-left: 22px;
	}

	/* transport */
	.transport {
		display: flex;
		align-items: center;
		gap: 4px;
		height: 36px;
		padding: 0 4px 2px;
		background: #25282b;
	}

	.transport .pair {
		width: 40px;
	}

	.aq {
		width: 36px;
		font-size: 13px;
	}

	.first-loc {
		margin-left: 23px;
	}

	.locator {
		width: 142px;
		font-size: 13px;
	}

	.locator + .locator {
		margin-left: 4px;
	}

	.locator .time {
		flex: 1;
		padding-right: 5px;
	}

	.locator .time span {
		min-width: 20px;
	}

	.locator .time span:last-child {
		min-width: 24px;
	}

	.group > button.edge {
		border-right: 1px solid #6a6d6e;
	}

	.main-controls {
		display: flex;
		width: 187px;
		height: 30px;
		margin-left: 1px;
		border: 2px solid #c9cacb;
		border-radius: 5px;
		overflow: hidden;
	}

	.main-controls button {
		flex: 1;
		background: #6c7071;
		color: #fff;
	}

	.main-controls .purple {
		background: #8468dd;
		color: #1b1140;
	}

	.main-controls .green {
		background: #44f53a;
		color: #0c4008;
	}

	.moon {
		width: 35px;
	}

	.locator.position {
		width: 140px;
	}

	.tempo {
		width: 101px;
		align-items: center;
	}

	.tempo > button {
		height: 22px;
	}

	.tempo input {
		flex: 1;
		min-width: 0;
		text-align: right;
		padding-right: 12px;
	}

	.tempo svg:last-child {
		margin-right: 6px;
	}

	.click {
		margin-left: auto;
	}

	.levels {
		width: 83px;
	}
</style>
